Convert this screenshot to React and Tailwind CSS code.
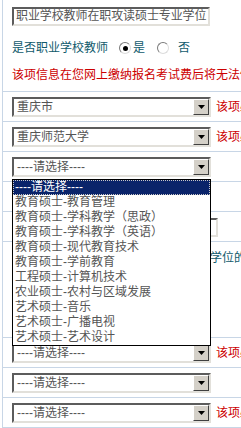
import React from 'react';

const sunken = 'border-2 border-t-[#5c5c5c] border-l-[#5c5c5c] border-r-[#e2e0da] border-b-[#e2e0da] bg-white';

function Select({ value }) {
  return (
    <div className={`flex h-[20px] w-[199px] shrink-0 ${sunken}`}>
      <div className="flex-1 overflow-hidden whitespace-nowrap pl-[3px] text-[12px] leading-[16px] text-[#555]">{value}</div>
      <div className="flex w-[16px] items-center justify-center border border-t-white border-l-white border-r-[#404040] border-b-[#404040] bg-[#d4d0c8]">
        <svg width="7" height="4" viewBox="0 0 7 4"><path d="M0 0h7L3.5 4z" fill="#000" /></svg>
      </div>
    </div>
  );
}

function Radio({ checked }) {
  return (
    <span className="inline-flex h-[12px] w-[12px] items-center justify-center rounded-full border border-t-[#7a7a7a] border-l-[#7a7a7a] border-r-[#dcdcdc] border-b-[#dcdcdc] bg-white">
      {checked && <span className="h-[5px] w-[5px] rounded-full bg-black" />}
    </span>
  );
}

function Note() {
  return <span className="ml-[5px] whitespace-nowrap text-[12px] leading-[16px] text-[#c00]">该项必须填写</span>;
}

function SelectRow({ value, note }) {
  return (
    <div className="flex h-[30px] items-center border-b border-[#c8d6e6] pl-[9px]">
      <Select value={value} />
      {note && <Note />}
    </div>
  );
}

const options = [
  '----请选择----',
  '教育硕士-教育管理',
  '教育硕士-学科教学（思政）',
  '教育硕士-学科教学（英语）',
  '教育硕士-现代教育技术',
  '教育硕士-学前教育',
  '工程硕士-计算机技术',
  '农业硕士-农村与区域发展',
  '艺术硕士-音乐',
  '艺术硕士-广播电视',
  '艺术硕士-艺术设计',
];

export default function App() {
  return (
    <div className="relative h-[428px] w-full overflow-hidden bg-white font-['Liberation_Sans','Noto_Sans_CJK_SC',sans-serif]">
      <div className="ml-[2px] border-l border-[#c8d6e6]">
        {/* top block */}
        <div className="flex h-[92px] flex-col border-b border-[#c8d6e6] pl-[9px] pt-[7px]">
          <div className={`h-[19px] w-[198px] ${sunken} overflow-hidden whitespace-nowrap pl-[2px] text-[12px] leading-[15px] tracking-[-0.1px] text-[#555]`}>
            职业学校教师在职攻读硕士专业学位
          </div>
          <div className="mt-[14px] flex h-[16px] items-center text-[12px] leading-[16px] text-[#105a6c]">
            <span className="whitespace-nowrap">是否职业学校教师</span>
            <span className="ml-[11px] flex items-center"><Radio checked /></span>
            <span className="ml-[2px]">是</span>
            <span className="ml-[12px] flex items-center"><Radio /></span>
            <span className="ml-[9px]">否</span>
          </div>
          <div className="mt-[11px] h-[16px] whitespace-nowrap text-[12px] leading-[16px] text-[#c00]">
            该项信息在您网上缴纳报名考试费后将无法修改
          </div>
        </div>

        <SelectRow value="重庆市" note />
        <SelectRow value="重庆师范大学" note />
        <SelectRow value="----请选择----" />
        <SelectRow value="----请选择----" />

        <div className="flex h-[30px] items-center border-b border-[#c8d6e6] pl-[9px] pt-[2px]">
          <div className={`h-[19px] w-[206px] ${sunken}`} />
        </div>

        <div className="h-[96px] border-b border-[#c8d6e6] pl-[15px] pt-[8px]">
          <div className="whitespace-nowrap text-[12px] leading-[16px] text-[#105a6c]">
            报考职业学校教师在职攻读硕士专业学位的考生
          </div>
        </div>

        <SelectRow value="----请选择----" note />
        <SelectRow value="----请选择----" />
        <SelectRow value="----请选择----" note />
      </div>

      {/* open dropdown list */}
      <div className="absolute left-[12px] top-[179px] w-[199px] border border-black bg-white">
        {options.map((o, i) => (
          <div
            key={o}
            className={
              i === 0
                ? 'h-[15px] whitespace-nowrap bg-[#0a246a] pl-[2px] text-[12px] leading-[15px] text-white outline-1 outline-dotted -outline-offset-1 outline-[#c8c8c8]'
                : 'h-[15px] whitespace-nowrap pl-[2px] text-[12px] leading-[15px] text-[#555]'
            }
          >
            {o}
          </div>
        ))}
      </div>
    </div>
  );
}
